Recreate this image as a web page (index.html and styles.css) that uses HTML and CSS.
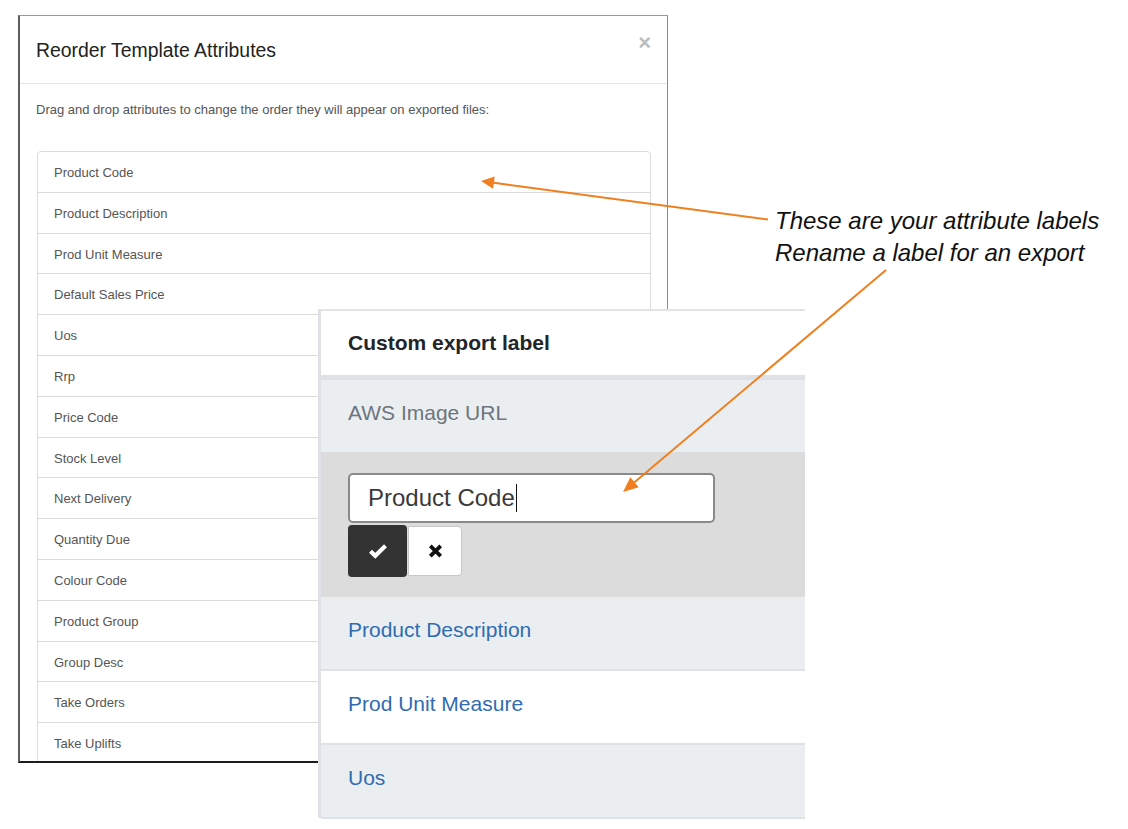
FILE: index.html
```html
<!DOCTYPE html>
<html lang="en">
<head>
<meta charset="utf-8">
<title>Reorder Template Attributes</title>
<link rel="stylesheet" href="styles.css">
</head>
<body>
<div class="canvas">
  <div class="modal">
    <div class="modal-header">
      <h4 class="modal-title">Reorder Template Attributes</h4>
      <span class="close">&times;</span>
    </div>
    <div class="modal-body">
      <p class="hint">Drag and drop attributes to change the order they will appear on exported files:</p>
      <ul class="attr-list">
        <li>Product Code</li>
        <li>Product Description</li>
        <li>Prod Unit Measure</li>
        <li>Default Sales Price</li>
        <li>Uos</li>
        <li>Rrp</li>
        <li>Price Code</li>
        <li>Stock Level</li>
        <li>Next Delivery</li>
        <li>Quantity Due</li>
        <li>Colour Code</li>
        <li>Product Group</li>
        <li>Group Desc</li>
        <li>Take Orders</li>
        <li>Take Uplifts</li>
      </ul>
    </div>
  </div>

  <div class="label-panel">
    <div class="panel-head">Custom export label</div>
    <div class="row row-muted">AWS Image URL</div>
    <div class="row-edit">
      <div class="fake-input">Product Code<span class="caret"></span></div>
      <div class="btns">
        <span class="btn btn-ok">
          <svg width="20" height="16" viewBox="0 0 20 16"><path d="M2.5 8.2 L7.3 12.8 L17.5 2.8" fill="none" stroke="#fff" stroke-width="4.2" stroke-linejoin="miter"/></svg>
        </span>
        <span class="btn btn-cancel">
          <svg width="15" height="14" viewBox="0 0 15 14"><path d="M2.3 1.8 L12.7 12.2 M12.7 1.8 L2.3 12.2" fill="none" stroke="#111" stroke-width="3.8"/></svg>
        </span>
      </div>
    </div>
    <div class="row row-link shaded">Product Description</div>
    <div class="row row-link">Prod Unit Measure</div>
    <div class="row row-link shaded">Uos</div>
  </div>

  <div class="callout">These are your attribute labels<br>Rename a label for an export</div>

  <svg class="arrows" width="1128" height="829" viewBox="0 0 1128 829">
    <line x1="768" y1="219.5" x2="492" y2="182.5" stroke="#ef7f1f" stroke-width="2"/>
    <polygon points="481,181 494.7,176.6 493.1,188.8" fill="#ef7f1f"/>
    <line x1="886" y1="270" x2="633" y2="483.5" stroke="#ef7f1f" stroke-width="2"/>
    <polygon points="623,492 630.3,477.3 638.7,487.3" fill="#ef7f1f"/>
  </svg>
</div>
</body>
</html>
```

FILE: styles.css
```css
html, body {
  margin: 0;
  padding: 0;
  background: #fff;
}

.canvas {
  position: relative;
  width: 1128px;
  height: 829px;
  overflow: hidden;
  font-family: "Liberation Sans", Arial, sans-serif;
}

/* ---------- Modal ---------- */
.modal {
  position: absolute;
  left: 18px;
  top: 15px;
  width: 650px;
  height: 748px;
  box-sizing: border-box;
  border-top: 1px solid #9a9a9a;
  border-right: 1px solid #8c8c8c;
  border-left: 2px solid #5c5c5c;
  border-bottom: 2px solid #231a1a;
  background: #fff;
  overflow: hidden;
}

.modal-header {
  display: flex;
  justify-content: space-between;
  align-items: flex-start;
  height: 68px;
  box-sizing: border-box;
  padding: 23px 16px 0 16px;
  border-bottom: 1px solid #e3e6ea;
}

.modal-title {
  margin: 0;
  font-size: 19.4px;
  line-height: 22px;
  font-weight: normal;
  color: #222;
}

.close {
  font-size: 22px;
  line-height: 20px;
  font-weight: bold;
  color: #bdbdbd;
  margin-top: -6px;
}

.modal-body {
  padding: 17px 16px 0 16px;
}

.hint {
  margin: 0 0 32px 0;
  font-size: 13px;
  line-height: 18px;
  color: #555;
}

.attr-list {
  list-style: none;
  margin: 0 0 0 1px;
  padding: 0;
}

.attr-list li {
  border: 1px solid #dcdcdc;
  margin-bottom: -1px;
  padding: 12px 16px 10px 16px;
  font-size: 13px;
  line-height: 17.8px;
  color: #555;
}

.attr-list li:first-child {
  border-top-left-radius: 4px;
  border-top-right-radius: 4px;
}

/* ---------- Custom label panel ---------- */
.label-panel {
  position: absolute;
  left: 318px;
  top: 309px;
  width: 487px;
  height: 509px;
  box-sizing: border-box;
  background: #fff;
  border-top: 2px solid #e1e4e8;
  border-left: 3px solid #dee2e6;
}

.panel-head {
  display: flex;
  align-items: center;
  height: 64px;
  padding-left: 27px;
  font-size: 21px;
  font-weight: bold;
  color: #212529;
  border-bottom: 5px solid #dee2e6;
}

.row {
  display: flex;
  align-items: center;
  height: 72px;
  box-sizing: border-box;
  padding: 0 0 7px 27px;
  font-size: 21px;
  border-bottom: 2px solid #dee2e6;
}

.row.row-link {
  height: 74px;
}

.row-muted {
  background: #ebeef1;
  color: #6c757d;
  border-bottom: 0;
}

.row-edit {
  height: 145px;
  box-sizing: border-box;
  padding: 21px 27px 0 27px;
  background: #dcdcdc;
}

.fake-input {
  display: flex;
  align-items: center;
  width: 367px;
  height: 50px;
  box-sizing: border-box;
  padding-left: 18px;
  border: 2px solid #8a8a8a;
  border-radius: 5px;
  background: #fff;
  font-size: 24px;
  color: #3a3a3a;
}

.caret {
  display: inline-block;
  width: 1px;
  height: 28px;
  background: #111;
  margin-left: 1px;
}

.btns {
  display: flex;
  align-items: flex-start;
  margin-top: 2px;
}

.btn {
  display: flex;
  align-items: center;
  justify-content: center;
  box-sizing: border-box;
}

.btn-ok {
  width: 59px;
  height: 52px;
  background: #333;
  border-radius: 4px;
}

.btn-cancel {
  width: 54px;
  height: 50px;
  margin-top: 1px;
  margin-left: 1px;
  background: #fff;
  border: 1px solid #c8c8c8;
  border-radius: 0 4px 4px 0;
}

.row-link {
  color: #2f6cb2;
}

.row-link.shaded {
  background: #ebeef1;
}

/* ---------- Annotations ---------- */
.callout {
  position: absolute;
  left: 775px;
  top: 205px;
  font-size: 24px;
  line-height: 32px;
  font-style: italic;
  color: #111;
  white-space: nowrap;
}

.arrows {
  position: absolute;
  left: 0;
  top: 0;
  pointer-events: none;
}
```
